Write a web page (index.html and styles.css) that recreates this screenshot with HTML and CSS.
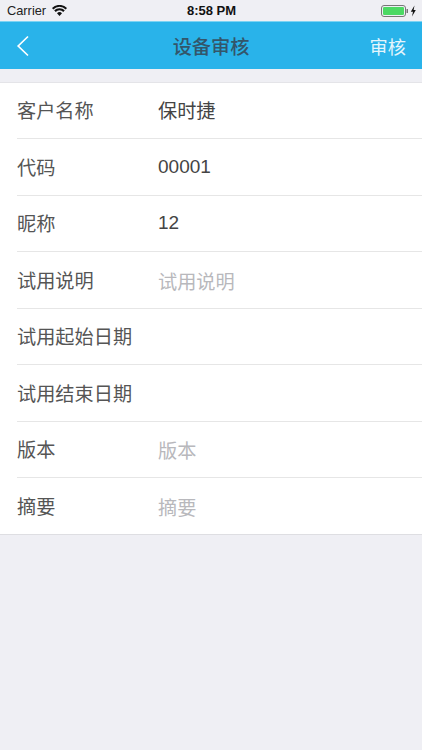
FILE: index.html
```html
<!DOCTYPE html>
<html lang="zh">
<head>
<meta charset="utf-8">
<title>设备审核</title>
<link rel="stylesheet" href="styles.css">
</head>
<body>
<div class="status">
  <div class="status-left">
    <span class="carrier">Carrier</span>
    <svg class="wifi" width="15" height="11" viewBox="0 0 15 11"><path d="M7.5 11 L5 8.2 A3.6 3.6 0 0 1 10 8.2 Z M3.7 6.9 L2.2 5.3 A7.6 7.6 0 0 1 12.8 5.3 L11.3 6.9 A5.4 5.4 0 0 0 3.7 6.9 Z M1.3 4.4 L0 3 A10.6 10.6 0 0 1 15 3 L13.7 4.4 A8.8 8.8 0 0 0 1.3 4.4 Z" fill="#111"/></svg>
  </div>
  <div class="time">8:58 PM</div>
  <div class="status-right">
    <svg width="35" height="12" viewBox="0 0 35 12"><rect x="0.5" y="0.5" width="24" height="11" rx="2.5" fill="none" stroke="#777"/><rect x="2" y="2" width="21" height="8" rx="1.2" fill="#4cd964"/><rect x="25.5" y="4" width="1.5" height="4" fill="#777"/><path d="M33.5 0.5 L29.8 6.8 H32 L31 11.5 L34.8 5 H32.6 Z" fill="#111"/></svg>
  </div>
</div>
<header class="nav">
  <svg class="back" width="14" height="22" viewBox="0 0 14 22"><path d="M12 1.5 L2.2 11 L12 20.5" fill="none" stroke="#fff" stroke-width="1.7"/></svg>
  <h1 class="title">设备审核</h1>
  <span class="action">审核</span>
</header>
<main class="form">
  <div class="row"><span class="label">客户名称</span><span class="value">保时捷</span></div>
  <div class="row"><span class="label">代码</span><span class="value num">00001</span></div>
  <div class="row"><span class="label">昵称</span><span class="value num">12</span></div>
  <div class="row"><span class="label">试用说明</span><span class="value hint">试用说明</span></div>
  <div class="row"><span class="label">试用起始日期</span></div>
  <div class="row"><span class="label">试用结束日期</span></div>
  <div class="row"><span class="label">版本</span><span class="value hint">版本</span></div>
  <div class="row"><span class="label">摘要</span><span class="value hint">摘要</span></div>
</main>
</body>
</html>
```
FILE: styles.css
```css
* { box-sizing: border-box; }
html, body { margin: 0; height: 100%; }
body {
  background: #efeff4;
  font-family: "Liberation Sans", "Noto Sans CJK SC", sans-serif;
  overflow: hidden;
}
.status {
  height: 21px;
  display: flex;
  align-items: center;
  justify-content: space-between;
  padding: 0 6px 0 7px;
  position: relative;
  color: #111;
  font-size: 12.8px;
}
.status-left { display: flex; align-items: center; gap: 6px; }
.carrier { color: #222; }
.wifi { display: block; }
.time {
  position: absolute;
  left: 1px;
  right: 0;
  text-align: center;
  font-weight: 700;
  font-size: 13px;
  pointer-events: none;
}
.status-right { display: flex; align-items: center; }
.status-right svg { display: block; }
.nav {
  height: 48px;
  background: #29b3ea;
  border-top: 1px solid #7dd3f3;
  display: flex;
  align-items: center;
  justify-content: space-between;
  padding: 0 16px;
  position: relative;
}
.back { display: block; }
.title {
  position: absolute;
  left: 0;
  right: 0;
  margin: 0;
  text-align: center;
  font-size: 19.2px;
  font-weight: 500;
  color: #33566a;
  pointer-events: none;
}
.action { font-size: 18.2px; color: #e4f5fc; }
.form {
  margin-top: 12.5px;
  background: #fff;
  border-top: 1px solid #e4e4e8;
  border-bottom: 1px solid #dedee2;
}
.row {
  height: 56.5px;
  margin-left: 17px;
  display: flex;
  align-items: center;
  border-bottom: 1px solid #e6e6e6;
  font-size: 19.2px;
}
.row:last-child { border-bottom: 0; height: 55.5px; }
.label { width: 141px; color: #555; flex: none; }
.value { color: #444; }
.num { font-size: 19px; }
.hint { color: #b8b8bc; padding-top: 2px; }
```
